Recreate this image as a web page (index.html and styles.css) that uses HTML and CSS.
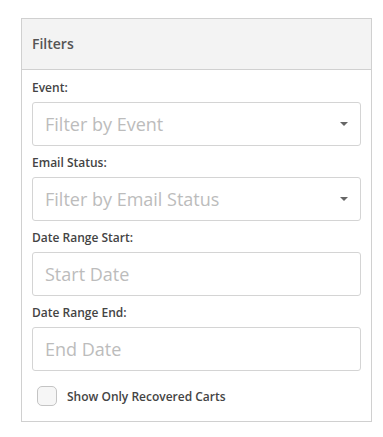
FILE: index.html
```html
<!DOCTYPE html>
<html>
  <head>
    <title>Filters</title>
    <link rel="stylesheet" href="styles.css">
  </head>
  <body>
    <div class="panel">
      <div class="panel-heading">Filters</div>
      <div class="panel-body">
        <div class="form-group">
          <label>Event:</label>
          <div class="select">
            <span class="placeholder">Filter by Event</span>
            <span class="caret"></span>
          </div>
        </div>
        <div class="form-group">
          <label>Email Status:</label>
          <div class="select">
            <span class="placeholder">Filter by Email Status</span>
            <span class="caret"></span>
          </div>
        </div>
        <div class="form-group">
          <label>Date Range Start:</label>
          <input type="text" placeholder="Start Date" />
        </div>
        <div class="form-group">
          <label>Date Range End:</label>
          <input type="text" placeholder="End Date" />
        </div>
        <div class="checkbox">
          <span class="box"></span>
          <span>Show Only Recovered Carts</span>
        </div>
      </div>
    </div>
  </body>
</html>
```

FILE: styles.css
```css
body {
  margin: 0;
  font-family: "Open Sans", Arial, sans-serif;
  color: #555;
  background: #fff;
}
.panel {
  width: 351px;
  margin: 18px 0 0 21px;
  border: 1px solid #d0d0d0;
  box-sizing: border-box;
}
.panel-heading {
  height: 50px;
  line-height: 50px;
  padding-left: 10px;
  background: #f3f3f3;
  border-bottom: 1px solid #d0d0d0;
  font-size: 14px;
  font-weight: 600;
  color: #555;
}
.panel-body {
  padding: 9px 10px 15px 10px;
}
.form-group {
  margin-bottom: 8px;
}
label {
  display: block;
  height: 18px;
  line-height: 18px;
  margin-bottom: 5px;
  font-size: 12px;
  font-weight: 600;
  color: #444;
}
.select,
input {
  display: flex;
  align-items: center;
  width: 100%;
  height: 44px;
  box-sizing: border-box;
  padding: 0 12px;
  border: 1px solid #d4d4d4;
  border-radius: 3px;
  background: #fff;
  font-family: "Open Sans", Arial, sans-serif;
  font-size: 18px;
}
.placeholder {
  flex: 1;
  color: #bcbcbc;
}
input::placeholder {
  color: #bcbcbc;
}
.caret {
  width: 0;
  height: 0;
  border-left: 4px solid transparent;
  border-right: 4px solid transparent;
  border-top: 4px solid #666;
}
.checkbox {
  display: flex;
  align-items: center;
  padding-top: 7px;
  font-size: 12px;
  font-weight: 600;
  color: #444;
}
.box {
  width: 20px;
  height: 20px;
  box-sizing: border-box;
  margin-left: 5px;
  margin-right: 10px;
  border: 1px solid #c4c4c4;
  border-radius: 5px;
  background: #f6f6f6;
}
```
